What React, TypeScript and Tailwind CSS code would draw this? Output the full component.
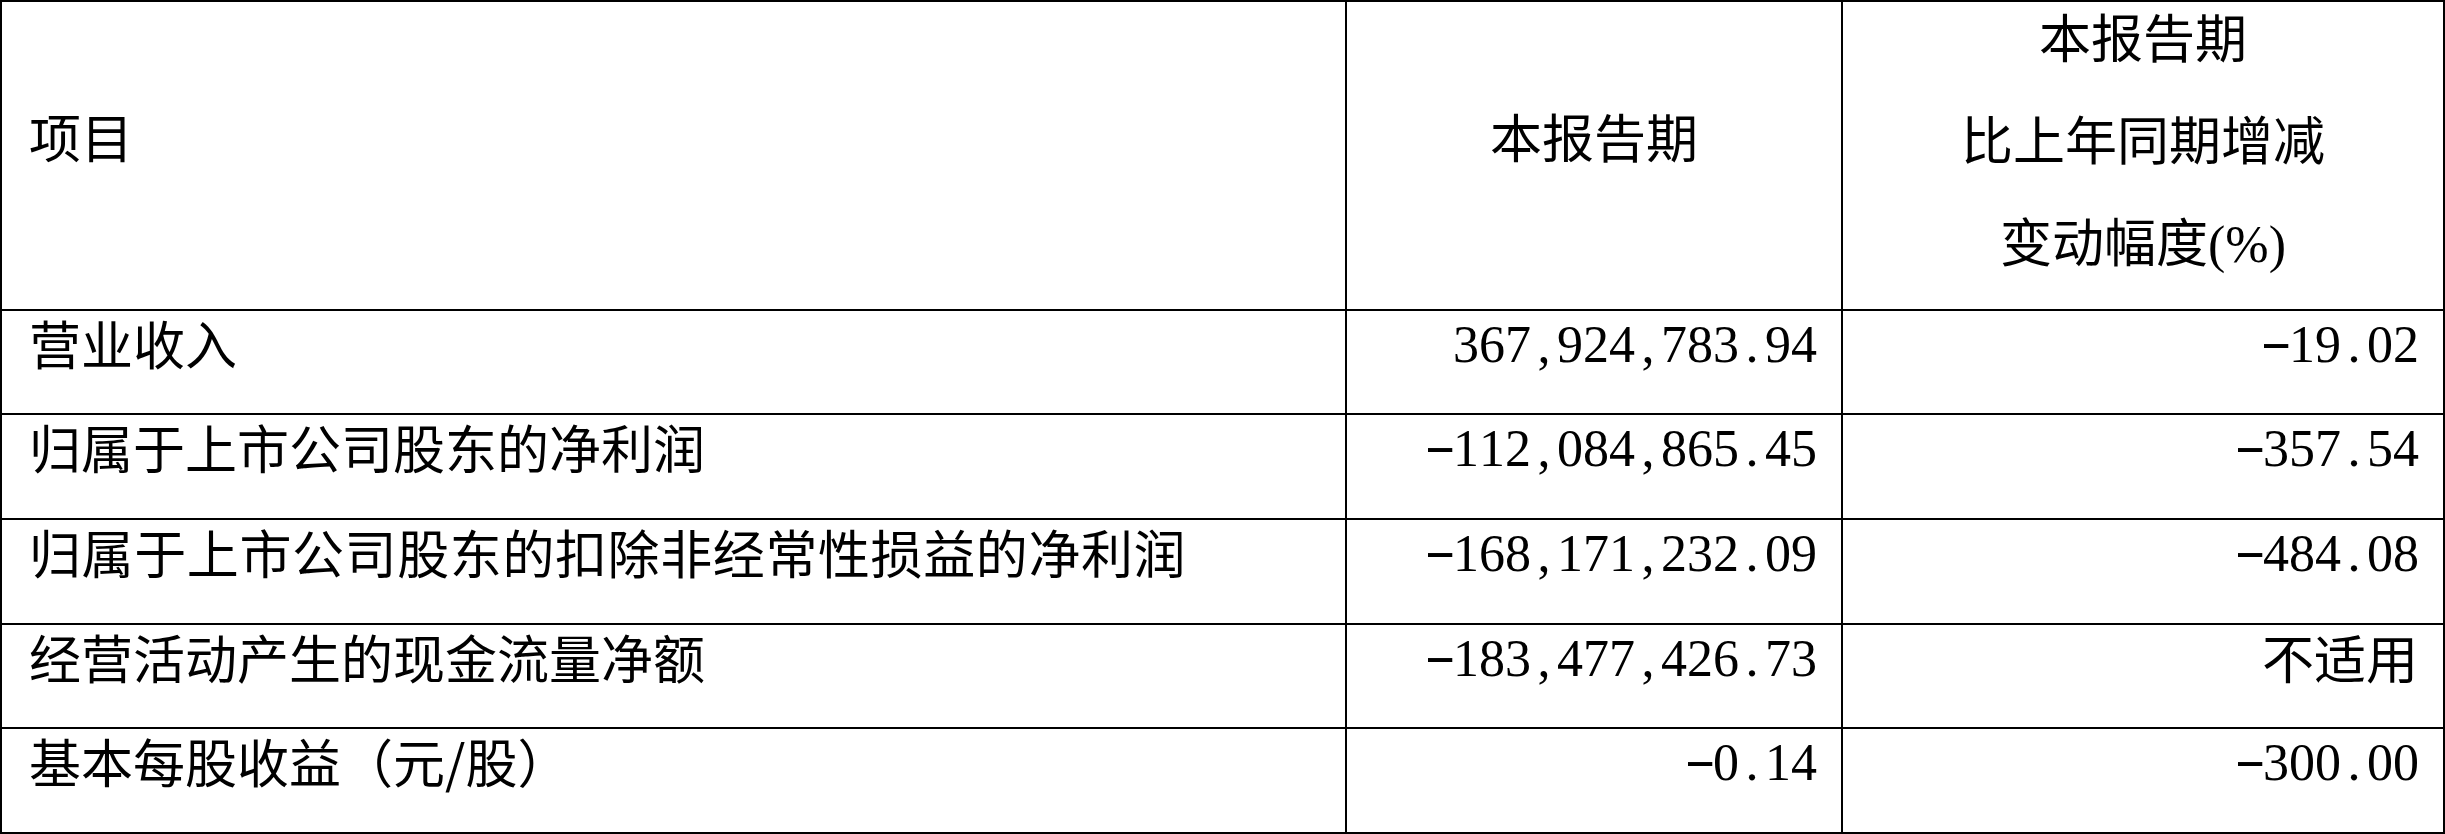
const rows = [
  { label: "营业收入", value: "367,924,783.94", change: "-19.02" },
  { label: "归属于上市公司股东的净利润", value: "-112,084,865.45", change: "-357.54" },
  {
    label: "归属于上市公司股东的扣除非经常性损益的净利润",
    value: "-168,171,232.09",
    change: "-484.08",
    wide: true,
  },
  { label: "经营活动产生的现金流量净额", value: "-183,477,426.73", change: "不适用" },
  { label: "基本每股收益（元/股）", value: "-0.14", change: "-300.00" },
];

// half-width figures, one cell per character like the source PDF font
function Figure({ text }: { text: string }) {
  return (
    <span className="inline-flex">
      {text.split("").map((ch, i) =>
        ch === "-" ? (
          <span key={i} className="inline-block w-[26px] scale-x-[1.8] -translate-y-[3px] text-center">
            -
          </span>
        ) : (
          <span key={i} className="inline-block w-[26px] text-center">
            {ch}
          </span>
        ),
      )}
    </span>
  );
}

export default function App() {
  return (
    <div className="h-[834px] w-[2445px] bg-white font-['Noto_Sans_CJK_SC',sans-serif] text-[52px] leading-[56px] text-black">
      <div className="grid grid-cols-[1343px_494px_600px] grid-rows-[307px_102px_103px_103px_102px_103px] gap-[2px] bg-black p-[2px]">
        <div className="bg-white pl-[27px] pt-[106px]">项目</div>
        <div className="bg-white pt-[106px] text-center">本报告期</div>
        <div className="flex flex-col items-center gap-[46px] bg-white pt-[6px]">
          <div>本报告期</div>
          <div>比上年同期增减</div>
          <div>
            变动幅度<span className="font-['Liberation_Serif',serif]">(%)</span>
          </div>
        </div>

        {rows.map((row) => (
          <>
            <div
              key={row.label}
              className={`bg-white pl-[27px] pt-[4px] whitespace-nowrap ${row.wide ? "tracking-[0.6px]" : ""}`}
            >
              {row.label}
            </div>
            <div className="flex justify-end bg-white pr-[24px] pt-[6px] font-['Liberation_Serif',serif]">
              <Figure text={row.value} />
            </div>
            {row.change === "不适用" ? (
              <div className="bg-white pr-[25px] pt-[4px] text-right">{row.change}</div>
            ) : (
              <div className="flex justify-end bg-white pr-[24px] pt-[6px] font-['Liberation_Serif',serif]">
                <Figure text={row.change} />
              </div>
            )}
          </>
        ))}
      </div>
    </div>
  );
}
